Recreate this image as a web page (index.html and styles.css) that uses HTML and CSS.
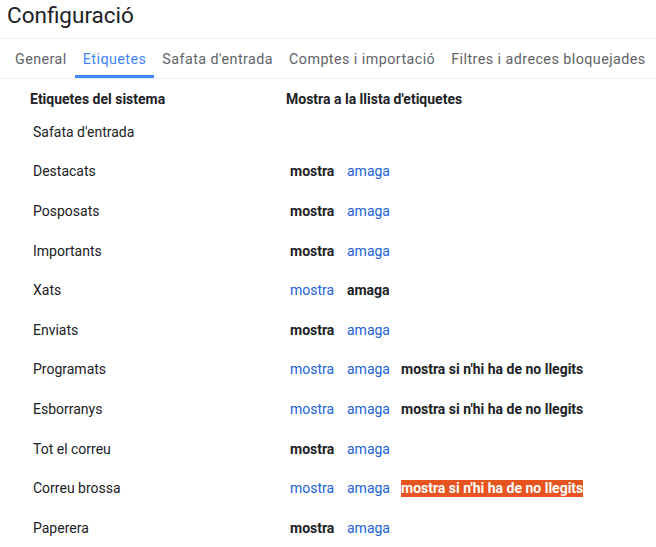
FILE: index.html
```html
<!DOCTYPE html>
<html lang="ca">
<head>
<meta charset="utf-8">
<title>Configuració</title>
<link rel="stylesheet" href="styles.css">
</head>
<body>
<h1 class="title">Configuració</h1>
<nav class="tabs">
  <span class="tab">General</span>
  <span class="tab active">Etiquetes</span>
  <span class="tab">Safata d'entrada</span>
  <span class="tab">Comptes i importació</span>
  <span class="tab">Filtres i adreces bloquejades</span>
</nav>
<div class="table">
  <div class="head">
    <span class="hcol1">Etiquetes del sistema</span>
    <span>Mostra a la llista d'etiquetes</span>
  </div>
  <div class="row"><span class="label">Safata d'entrada</span></div>
  <div class="row"><span class="label">Destacats</span><span class="act on">mostra</span><span class="act2 link">amaga</span></div>
  <div class="row"><span class="label">Posposats</span><span class="act on">mostra</span><span class="act2 link">amaga</span></div>
  <div class="row"><span class="label">Importants</span><span class="act on">mostra</span><span class="act2 link">amaga</span></div>
  <div class="row"><span class="label">Xats</span><span class="act link">mostra</span><span class="act2 on">amaga</span></div>
  <div class="row"><span class="label">Enviats</span><span class="act on">mostra</span><span class="act2 link">amaga</span></div>
  <div class="row"><span class="label">Programats</span><span class="act link">mostra</span><span class="act2 link">amaga</span><span class="on">mostra si n'hi ha de no llegits</span></div>
  <div class="row"><span class="label">Esborranys</span><span class="act link">mostra</span><span class="act2 link">amaga</span><span class="on">mostra si n'hi ha de no llegits</span></div>
  <div class="row"><span class="label">Tot el correu</span><span class="act on">mostra</span><span class="act2 link">amaga</span></div>
  <div class="row"><span class="label">Correu brossa</span><span class="act link">mostra</span><span class="act2 link">amaga</span><span class="on hl">mostra si n'hi ha de no llegits</span></div>
  <div class="row"><span class="label">Paperera</span><span class="act on">mostra</span><span class="act2 link">amaga</span></div>
</div>
</body>
</html>
```

FILE: styles.css
```css
* { box-sizing: border-box; }
body {
  margin: 0;
  font-family: Roboto, "Liberation Sans", Arial, sans-serif;
  color: #202124;
  background: #fff;
  font-size: 14px;
}
.title {
  margin: 0;
  padding: 0 0 0 7px;
  height: 38px;
  font-size: 22.5px;
  font-weight: 400;
  line-height: 30px;
  color: #202124;
}
.tabs {
  display: flex;
  padding-left: 7px;
  border-top: 1px solid #eceef1;
  border-bottom: 1px solid #eceef1;
  height: 41px;
}
.tab {
  padding: 0 8px;
  height: 39px;
  line-height: 40px;
  font-size: 14.3px;
  letter-spacing: 0.45px;
  color: #5f6368;
  border-bottom: 3px solid transparent;
  white-space: nowrap;
}
.tab.active {
  color: #4285f4;
  border-bottom-color: #4285f4;
}
.head {
  display: flex;
  padding: 10px 0 0 30px;
  height: 33px;
  line-height: 20px;
  font-weight: 700;
  font-size: 14px;
}
.hcol1 { width: 256px; }
.row {
  display: flex;
  align-items: center;
  height: 39.6px;
  padding-left: 33px;
  line-height: 20px;
}
.label { width: 257px; }
.act { width: 57px; }
.act2 { width: 54px; }
.on { font-weight: 700; color: #202124; }
.link { color: #1a62d8; }
.hl {
  background: #e8541f;
  color: #fff;
  line-height: 17px;
}
```
